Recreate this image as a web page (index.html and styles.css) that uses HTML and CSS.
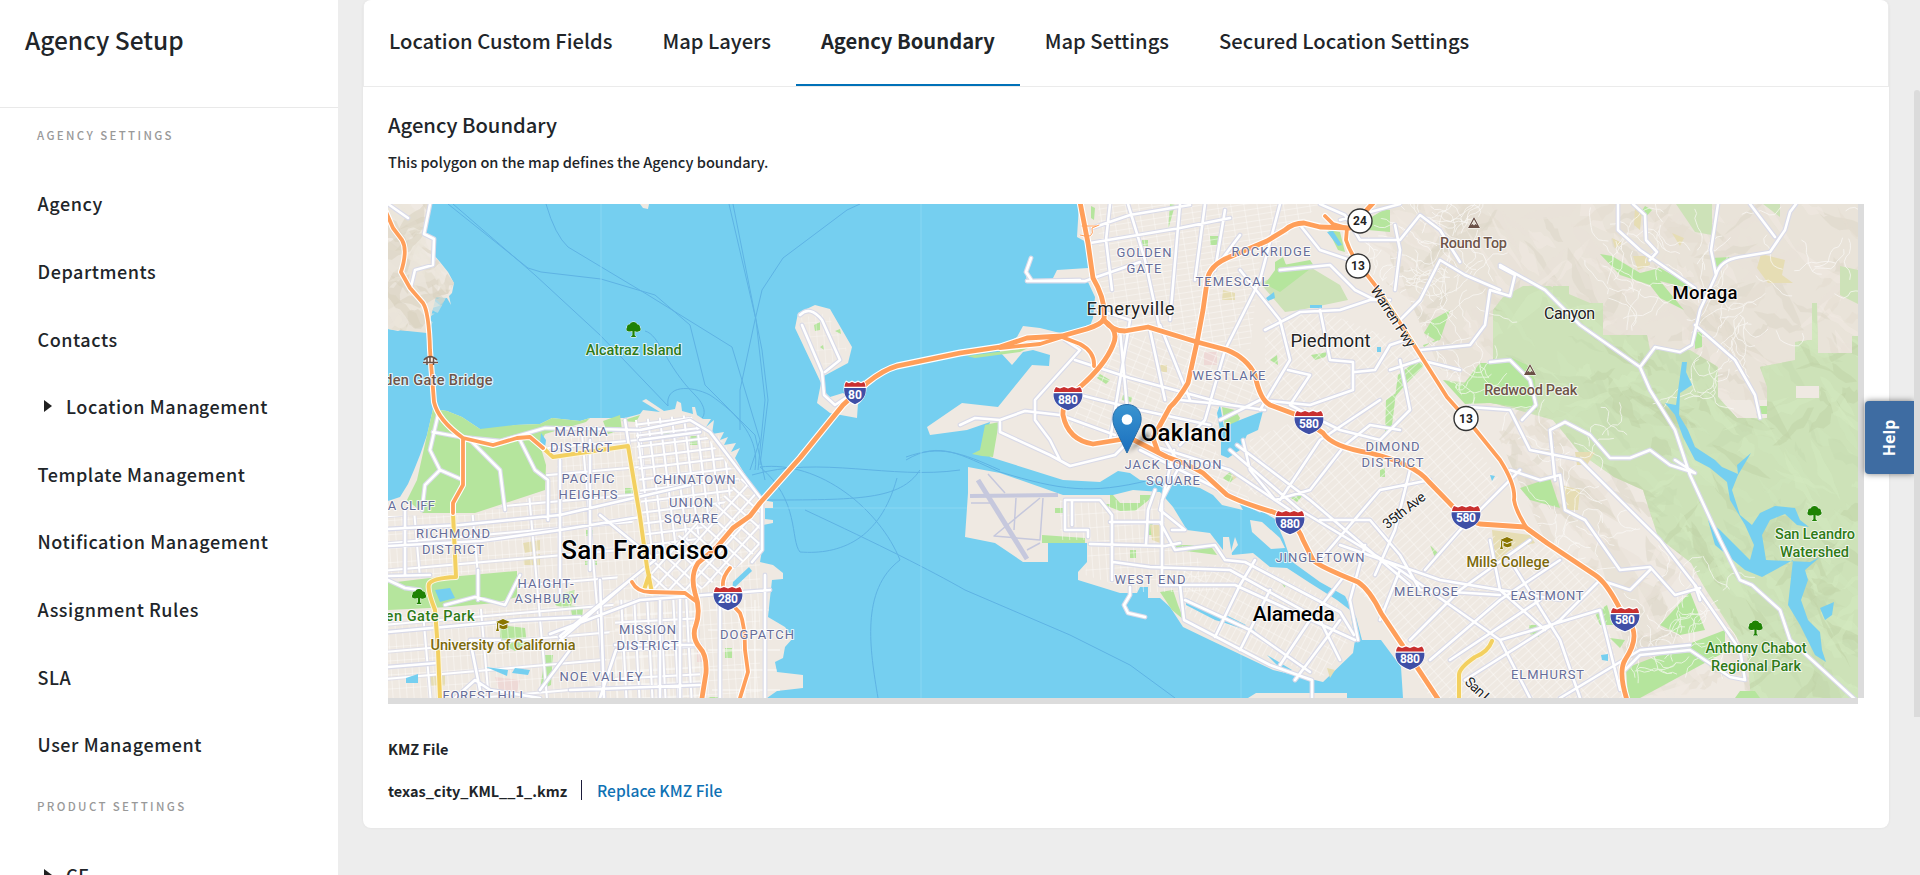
FILE: index.html
```html
<!DOCTYPE html>
<html lang="en">
<head>
<meta charset="utf-8">
<title>Agency Setup</title>
<link rel="stylesheet" href="styles.css">
</head>
<body>
<div class="app">
  <aside class="sidebar">
    <h1 class="sidebar-title"><span class="t-title">Agency Setup</span></h1>
    <h2 class="nav-label">AGENCY SETTINGS</h2>
    <nav class="nav">
      <a class="nav-item">Agency</a>
      <a class="nav-item">Departments</a>
      <a class="nav-item">Contacts</a>
      <a class="nav-item nav-parent"><i class="caret"></i>Location Management</a>
      <a class="nav-item">Template Management</a>
      <a class="nav-item">Notification Management</a>
      <a class="nav-item">Assignment Rules</a>
      <a class="nav-item">SLA</a>
      <a class="nav-item">User Management</a>
    </nav>
    <h2 class="nav-label">PRODUCT SETTINGS</h2>
    <nav class="nav">
      <a class="nav-item nav-parent"><i class="caret"></i>CE</a>
    </nav>
  </aside>
  <main class="main">
    <section class="card">
      <div class="tabs">
        <a class="tab">Location Custom Fields</a>
        <a class="tab">Map Layers</a>
        <a class="tab active">Agency Boundary</a>
        <a class="tab">Map Settings</a>
        <a class="tab">Secured Location Settings</a>
      </div>
      <div class="content">
        <h3 class="heading">Agency Boundary</h3>
        <p class="desc">This polygon on the map defines the Agency boundary.</p>
        <div class="map-frame">
          <svg class="map" viewBox="388 204 1470 494" width="1470" height="494">
            <defs>
              <pattern id="gridWest" width="7" height="14" patternUnits="userSpaceOnUse" patternTransform="rotate(-4)"><path class="lane" d="M0 0H7M0 0V14"/></pattern>
              <pattern id="gridWestMain" width="58" height="27" patternUnits="userSpaceOnUse" patternTransform="rotate(-5)"><path class="mid-case" d="M0 8H58M20 0V27"/><path class="mid" d="M0 8H58M20 0V27"/></pattern>
              <pattern id="gridDown" width="12" height="11" patternUnits="userSpaceOnUse" patternTransform="rotate(-7)"><path class="mid-case" d="M0 4H12M4 0V11"/><path class="mid" d="M0 4H12M4 0V11"/></pattern>
              <pattern id="gridSoma" width="12" height="12" patternUnits="userSpaceOnUse" patternTransform="rotate(42)"><path class="mid-case" d="M0 4H12M4 0V12"/><path class="mid" d="M0 4H12M4 0V12"/></pattern>
              <pattern id="gridMission" width="13" height="28" patternUnits="userSpaceOnUse" patternTransform="rotate(-3)"><path class="lane" d="M0 3H13M0 17H13M8 0V28"/><path class="mid-case" d="M0 10H13M4 0V28"/><path class="mid" d="M0 10H13M4 0V28"/></pattern>
              <pattern id="gridBerk" width="13" height="6" patternUnits="userSpaceOnUse" patternTransform="rotate(-9)"><path class="lane" d="M0 0H13M0 0V6"/></pattern>
              <pattern id="gridOak" width="12" height="7" patternUnits="userSpaceOnUse" patternTransform="rotate(22)"><path class="lane" d="M0 0H12M0 0V7"/></pattern>
              <pattern id="gridEast" width="14" height="6" patternUnits="userSpaceOnUse" patternTransform="rotate(-42)"><path class="lane" d="M0 0H14M0 0V6"/></pattern>
              <pattern id="gridAla" width="6" height="13" patternUnits="userSpaceOnUse" patternTransform="rotate(28)"><path class="lane" d="M0 0H6M0 0V13"/></pattern>
              <clipPath id="sfClip"><path d="M388 501L400 497 408 484 414 470 420 455 427 435 433 409 447 411 462 417 480 429 497 430 515 425 540 424 552 418 580 421 590 418 625 418 640 414 652 410 675 409 695 414 705 419 722 440 733 457 746 476 762 500 763 525 762 550 760 562 772 580 770 598 768 617 785 627 793 638 785 647 783 658 775 662 777 672 803 675 803 688 777 691 767 698 388 698Z"/></clipPath>
              <clipPath id="hillClip"><path d="M1395 204H1858V698H1640L1600 585 1545 540 1500 440 1440 370 1410 300 1345 255Z"/></clipPath>
              <clipPath id="woodClip"><use href="#wood"/></clipPath>
              <clipPath id="marinClip"><path d="M388 204H430L424 235 434 255 454 283 427 333 388 329Z"/></clipPath>
              <symbol id="tree" viewBox="0 0 16 16" overflow="visible"><path class="icon-halo" d="M8 0C5.500 0 4.500 1.200 4.200 2.500 2 2.500 .8 4 1.200 5.500 -.5 7.500 .8 10 3 10 4.500 10.500 6 10 6.800 9.700V14L5 16H11L9.200 14V9.700C10 10.500 12 10.500 13 10 15.500 10 16.500 7.500 14.800 5.500 15.200 4 13.800 2.500 11.800 2.500 11.500 1.200 10.500 0 8 0Z"/></symbol>
              <symbol id="peak" viewBox="0 0 12 11" overflow="visible"><path class="peak" d="M6 0L12 11H0ZM6 2.500L3 8 4.700 7 6 8.500 7.300 7 9 8Z" fill-rule="evenodd"/></symbol>
              <symbol id="cap" viewBox="0 0 14 12" overflow="visible"><path class="cap" d="M7 0L14 3 7 6 0 3ZM3.500 5.500L7 7 11.500 5.300V9C9 10.500 6 10.500 3.500 9ZM1 4H2.200V9L3 12H0L1 9Z"/></symbol>
              <symbol id="shield" viewBox="-16 -13 32 26" overflow="visible">
                <path fill="#fff" d="M-12-12.500L-8-11-4-12.500 0-11 4-12.500 8-11 12-12.500 14.500-9C17 0 13 9 0 13.500-13 9-17 0-14.500-9Z"/>
                <path fill="#c9302f" d="M-12-11L-8-9.500-4-11 0-9.500 4-11 8-9.500 12-11 13.500-8.500 14-6H-14L-13.500-8.500Z"/>
                <path fill="#3f4fa6" d="M-14.400-4.700H14.400C15 3 11 8.500 0 12.200-11 8.500-15 3-14.400-4.700Z"/>
              </symbol>
              <linearGradient id="pin" x2="0" y2="1"><stop offset="0" stop-color="#3a94d0"/><stop offset="1" stop-color="#1a6fbe"/></linearGradient>
              <filter id="soft"><feGaussianBlur stdDeviation="2"/></filter>
            </defs>

            <rect class="water" x="388" y="204" width="1470" height="494"/>
            <g class="ferry">
              <path d="M448 204L528 268 541 272 601 279 655 295 690 325 705 385 755 435 765 480M453 204L535 275 600 335 668 406M546 204Q555 235 568 247L648 295 732 347 760 440 750 470M729 204L756 320 765 400 758 470M733 204L762 350 768 400 760 465M860 204L847 210 783 258 762 290 755 320 740 390 740 430M645 331C660 335 665 365 695 395 705 405 707 415 700 420M668 406C665 385 690 385 710 395 740 415 760 440 755 470"/>
              <path d="M760 467C820 460 880 510 900 560 860 590 870 650 878 698M760 467C800 500 790 540 800 552 840 555 880 540 897 478M752 475C820 455 890 480 960 470M906 460C940 440 960 455 1000 472 1060 490 1090 495 1150 480M906 457C940 445 960 452 1000 470M805 510C880 545 930 570 965 590L1070 635 1130 665 1175 698M760 500C860 500 900 500 920 470"/>
              <path class="tile" d="M601 204V698M921 204V698M1241 204V698M388 508H1240"/>
            </g>

            <!-- shoreline -->
            <g class="land">
              <path d="M388 204H430L428 215 424 223V235L432 240 434 255 440 262 448 272 454 283 452 293 449 296 451 305 447 298 433 297 431 306 429 311 427 333 420 330 413 331 405 328 398 331 388 329Z"/>
              <path d="M388 501L400 497 408 484 414 470 420 455 427 435 433 409 447 411 462 417 480 429 497 430 515 425 540 424 552 418 580 421 590 418 625 418 640 414 643 410 660 412 642 401 646 399 664 411 675 409 677 401 681 403 682 411 693 414 692 407 695 407 697 415 703 419 711 419 706 427 714 420 712 434 724 432 720 440 728 437 724 445 736 443 731 452 740 448 735 458 746 476 762 500 773 502V508H765V519L773 520V523L763 525 762 550 760 562 773 565 783 573V579L772 580 770 598 768 617 785 627 793 638 785 647 783 658 775 662 777 672 803 675V688L777 691 767 698H388Z"/>
              <path d="M798 313L815 305 830 309 852 347 848 363 822 377 823 390 830 397 843 393 858 403 857 418 830 413 817 403 821 383 795 328Z"/>
              <path d="M640 204H649L648 209 643 208Z"/>
              <path d="M1079 204L1077 237 1088 243V268L1057 270 1052 280 1035 279 1027 281 1025 270 1031 258 1027 272 1032 283 1088 282 1095 297 1093 318 1088 331 1060 333 1040 328 1023 326 1017 337 1000 347V352L1012 365 1023 352 1033 350 1050 355 1049 366 1032 365 998 407 962 403 927 427 930 435 967 430 990 422 985 440 990 457 1063 480 1100 482 1118 471 1130 473 1140 480 1177 483 1200 488 1213 495 1222 505 1243 510 1237 500 1222 498 1250 504 1275 519 1284 540 1291 561 1320 582 1345 596 1356 617 1362 640 1381 640 1401 667 1403 698H1858V204Z"/>
              <path d="M968 467L1000 473 1063 495 1113 495 1133 490 1160 492 1173 507 1187 530 1210 533 1223 550 1223 537 1229 537 1232 555 1253 553 1270 567 1287 568 1310 583 1337 600 1350 610 1355 640 1353 653 1323 682 1273 670 1210 640 1183 627 1170 607 1160 598H1148V587H1140L1137 593 1120 593 1078 580V572L1087 562V543H1048V562H1023L995 543 965 537 968 493Z"/>
              <path d="M1250 520L1262 522 1280 538 1285 548 1271 549 1252 532ZM1235 537L1238 545 1230 555ZM1248 698L1256 693H1347V698Z"/>
            </g>

            <!-- relief and woodland -->
            <path class="hill" d="M1375 204H1858V400H1560L1440 370 1410 300ZM1530 475L1590 500 1640 580 1660 590 1700 680 1640 698 1600 560ZM388 240L440 280 427 333 388 329Z"/>
            <g id="reliefHills" clip-path="url(#hillClip)"></g>
            <g id="reliefMarin" clip-path="url(#marinClip)"></g>
            <path class="wood" id="wood" d="M1503 297L1523 286H1550L1590 303H1603V335H1647L1650 350 1690 350 1718 367V397L1737 418H1767V387L1760 367 1795 360V342L1812 340V303H1817L1818 353H1852V336H1858V698H1751L1747 653 1706 590 1691 563 1658 537 1643 490 1614 477 1580 453 1553 420 1500 405 1480 400 1443 380 1470 383 1493 360V310Z"/>
            <g id="reliefWood" clip-path="url(#woodClip)"></g>
            <g class="wood"><path d="M1840 266L1858 270V304L1840 295ZM1676 204H1712V235L1695 232ZM1260 283L1305 264 1340 285 1348 300 1300 310 1285 312ZM1553 286H1569V297H1553ZM1763 204H1780V217Z"/></g>
            <path class="land" d="M1796 386H1819V398H1796Z"/>
            <g class="park">
              <path d="M433 409L447 411 462 417 480 429 515 425 540 424 552 418 580 421 590 418 586 422 545 434 540 445 546 465 545 490 475 513 423 513 407 500 417 480 427 435Z"/>
              <path d="M603 421L620 415 622 430 608 434ZM621 421L640 415 636 422ZM388 583L430 578 460 576 517 571V597L495 603 450 607 388 610ZM500 625L525 628 527 645 515 651 500 643ZM570 605L583 608 582 618 573 620ZM560 594L575 590 570 610 555 605ZM545 655L553 655 551 685 540 690ZM586 530H593V536H586ZM585 561H597V565H585ZM625 488H635V495H625ZM662 432H670V439H662ZM690 436H700V445H690ZM725 648H732V658H725ZM710 697H720V698H708Z"/>
              <path d="M985 425L999 422 993 457 982 456 972 454 980 450ZM967 356L1028 348 1020 352 975 358ZM1100 374L1110 380 1106 384 1097 378ZM1123 395L1132 397 1131 402 1122 400ZM1091 206L1095 208 1094 220 1091 218ZM814 325L820 322 820 330 815 331ZM835 331L840 329 841 334ZM820 347L823 345 824 350Z"/>
              <path d="M1265 284L1278 266 1310 260 1314 266 1280 292ZM1275 262L1283 257 1288 270 1275 273ZM1370 218L1385 209 1390 210V232L1368 230ZM1328 230L1340 232 1345 252 1338 250ZM1222 407L1235 410 1240 418 1235 428 1225 427ZM1210 236H1219V245H1210ZM1311 355L1328 352 1325 357 1315 360ZM1270 360L1277 355 1278 365ZM1102 504H1110V495H1113L1120 503H1140V495H1155L1135 511H1120M1055 508H1067V513H1055ZM1042 535L1085 538V543H1042ZM1173 545L1210 545 1217 555 1178 550ZM1148 523H1153V535H1148ZM1160 592L1173 590 1178 605 1184 620 1172 610ZM1130 550H1136V558H1130ZM1280 581L1287 583 1285 588Z"/>
              <path d="M1600 254L1612 256 1640 273 1660 268 1690 285 1695 290 1660 281 1684 310 1660 298 1650 285 1620 275ZM1712 258L1730 257 1716 272ZM1443 380L1463 385 1480 363 1493 363 1510 357 1527 365 1535 380 1537 410 1490 403 1465 404ZM1423 345L1440 340 1450 310 1432 320 1424 333 1435 340 1424 347ZM1398 375L1420 358 1425 365 1405 385 1395 397ZM1386 400L1396 393 1392 425 1385 437ZM1520 488L1550 478 1560 508 1530 500ZM1595 613L1607 605 1613 625 1600 625ZM1660 625L1690 592 1705 630 1680 635ZM1626 668L1725 630 1725 652 1640 698H1628ZM1529 625L1540 625 1539 637 1530 634ZM1760 698L1755 691H1740L1735 698ZM1610 638L1625 640 1620 648ZM1695 332H1702V347L1695 349ZM1760 406H1767V414H1760Z"/>
              <path d="M1232 470L1236 476 1230 483 1223 478ZM1293 493L1303 495 1297 502 1291 498ZM1170 204L1175 205 1168 230ZM1142 240H1148V246H1142ZM1380 470 1385 468V477H1380ZM1430 545L1440 555 1436 560ZM1640 214 1645 206 1652 210 1645 218Z"/>
            </g>
            <g class="school"><path d="M1761 254L1785 260 1782 275 1793 283H1768L1757 268ZM1635 207L1642 210 1640 230 1634 225ZM1672 233L1684 238 1680 246ZM1633 256H1650V265L1638 270ZM1612 238L1622 243 1615 248ZM1492 530L1530 535 1535 543 1510 550 1495 562ZM1150 525H1163V544L1152 540ZM523 543L540 540V550L525 553ZM523 557L540 554V565H524ZM1230 469L1240 475 1233 480ZM1223 290L1235 293V300H1222ZM1575 452H1595L1587 465H1577ZM1561 485 1580 490 1578 510 1562 510ZM430 675H445V686H430ZM1158 365H1167V372H1158ZM1327 668 1335 670 1330 678Z"/></g>
            <g class="clinic"><path d="M1204 352H1217V365H1204ZM697 645H703V662H697ZM495 677L520 680 517 692 500 693Z"/></g>

            <!-- residential street grids -->
            <g clip-path="url(#sfClip)">
              <path fill="url(#gridWest)" d="M388 516L475 515 545 493 560 460 560 430 740 430 760 560 760 698 388 698V613L500 608 517 600V570L388 580Z"/>
              <path fill="url(#gridWestMain)" d="M388 516L475 515 545 493 548 440 690 420 640 500 620 560 600 698 388 698V613L500 608 517 600V570L388 580Z"/>
              <path fill="url(#gridDown)" d="M635 420L690 415 740 480 700 540 645 560Z"/>
              <path fill="url(#gridSoma)" d="M745 475L763 500V545L740 565 700 590H655L645 560 700 520Z"/>
              <path fill="url(#gridMission)" d="M615 600L700 597V698H615Z"/>
              <path class="lane" fill="none" d="M745 600V698M755 600V698M710 610H770M708 630H780M708 650H780M708 670H780M712 690H780"/>
            </g>
            <path fill="url(#gridBerk)" d="M1098 204H1320L1260 260 1250 350 1200 340 1115 325 1100 280Z"/>
            <path fill="url(#gridOak)" d="M1115 330L1240 355 1265 400 1220 410 1215 450 1250 500 1220 492 1130 440 1070 425Z"/>
            <path fill="url(#gridEast)" d="M1250 440L1310 415 1345 450 1430 485 1500 540 1545 545 1600 590 1625 698H1430L1380 610 1320 560 1290 510 1245 490Z"/>
            <path fill="url(#gridEast)" d="M1265 320L1320 310 1420 350 1440 400 1500 480 1480 520 1440 480 1345 440 1290 405 1265 395Z"/>
            <path fill="url(#gridAla)" d="M1175 570L1253 560 1340 605 1350 640 1323 677 1230 645 1185 610Z"/>
            <path fill="url(#gridWest)" d="M1090 540H1175L1200 560 1220 592H1140L1085 575ZM1060 500H1165V540H1060Z"/>
            <path fill="url(#gridWest)" opacity=".7" d="M800 318L827 313 847 350 825 368Z"/>
            <g id="lanes" class="lane winding" fill="none" clip-path="url(#hillClip)"></g>

            <!-- inland water, above the street texture -->
            <g class="water">
              <path d="M1217 413L1220 405 1224 427 1240 420 1263 411 1258 430 1247 435 1240 450 1228 458 1221 455V436Z"/>
              <path d="M1327 232L1333 231 1342 245 1338 246ZM1266 298L1274 292 1275 298 1268 301ZM1377 347H1381V352H1377ZM1310 305H1322V308H1310ZM733 582L749 567 752 571 732 590ZM435 590L450 588 455 598 440 602ZM406 678L418 674V683H406ZM515 668L530 670 528 675 512 673ZM486 667L508 670 507 676ZM541 433L546 440 545 448 540 444ZM1490 475L1495 476 1492 481ZM1601 655L1608 654 1608 661 1602 660Z"/>
              <path d="M1186 598L1220 615 1228 616 1246 625 1243 629 1225 623 1215 620 1186 605ZM1252 627L1265 642 1258 638ZM1267 655L1292 670 1285 673Z"/>
              <path d="M1682 362L1687 362 1686 372 1692 385 1680 393 1679 415 1688 430 1695 447 1715 460 1722 467 1738 474 1737 465 1751 453 1738 475 1732 490 1740 515 1752 525 1760 513 1775 506 1795 508 1800 520 1809 527 1797 525 1785 514 1770 520 1762 535 1766 560 1810 562 1820 557 1805 570 1808 580 1801 600 1808 620 1820 632 1822 650 1826 662 1815 655 1800 625 1788 605 1793 560 1762 577 1745 570 1715 545 1708 520 1720 530 1750 560 1754 545 1745 525 1730 500 1727 482 1710 468 1695 460 1683 437 1675 415 1665 403 1676 405ZM1820 608L1834 602 1832 615 1825 620Z"/>
            </g>

            <!-- local roads -->
            <g class="road-case"><use href="#roads"/></g>
            <g id="roads" class="road">
              <path d="M388 204L408 218M430 204L424 234 434 239 433 265 415 270 411 287M433 432L460 437 500 441 545 428 640 430 690 420 710 432 762 500 762 550 752 562M388 529L460 525 560 515 690 485M388 546L480 541 560 530 640 517M388 576L430 575M388 632L520 620 580 617M388 667L437 663M405 510V575M478 570V600M560 460V600M590 440V570M625 420L640 520M600 515L655 560 560 636 570 650 540 690M630 580L560 640M500 640L470 640 480 690M550 634L640 600 770 590M765 575V698M720 600V698M455 698L475 680 490 690 540 698M640 440L700 432M388 580L405 588 420 590M445 605L475 597 505 605 520 575M438 415L430 450 440 470 425 485 422 510M440 470L463 480M470 440L500 470 505 510M520 440L535 470 548 480V520M600 580L604 698M660 600V698M680 600V698M615 645H700M570 690L700 685M600 698L616 650"/>
              <path d="M800 315Q810 305 822 320L840 360 825 372M802 325L822 372 824 395 835 405 850 395M1027 281H1085L1140 262M1031 258L1026 272 1032 281 1080 280M1092 228L1130 215 1190 205M1090 243L1180 228 1230 218M1128 204L1145 260 1160 330M1180 204L1170 320M1110 204L1106 240 1112 290M1205 204L1195 280M1225 210L1215 270M1280 204L1260 280 1225 350 1205 420 1180 445M1240 235L1210 275M1098 310L1130 320 1110 440M1075 360L1130 378 1230 405M1080 395L1140 410 1210 425M1120 330L1130 440M1150 330L1165 400M1160 325L1190 400M1065 340L1080 350 1035 400 1035 420 1050 440 1060 460M960 425L975 418 1000 420 1025 411 1060 415 1115 435M1000 422V432L1050 455 1070 466 1115 455 1125 445M1140 450L1260 510M1135 440L1230 470 1290 510"/>
              <path d="M1065 530V500L1100 500 1112 515V580M1065 530H1088V537M1072 500V525M1110 522H1160L1175 550 1215 545 1225 560 1245 562 1340 612 1354 635M1090 544L1165 546 1180 543M1113 562L1150 567 1230 570 1320 620 1340 660M1165 440L1180 465 1162 500V585L1180 585 1184 620 1270 665 1312 680V698M1160 585H1235L1355 640M1174 450L1160 510 1185 530 1172 530M1215 637L1240 585 1255 560M1240 650L1270 590M1280 665L1310 620 1345 575M1295 680L1340 620M1185 600L1250 630 1310 672M1130 587V595L1124 605 1128 613 1145 617M1155 490L1148 510 1146 545"/>
              <path d="M1230 450L1300 510 1400 570 1500 640 1530 698M1237 445L1310 500 1410 585M1243 440L1250 470 1275 500 1310 490 1345 445 1370 425 1400 430M1280 500L1320 440 1380 400M1320 520H1370L1400 555 1420 590 1500 595M1340 545L1440 580 1560 600M1320 560L1380 490 1430 480M1375 575L1395 530 1410 470M1425 570L1460 530 1520 470M1400 570L1380 620M1410 640L1460 590 1530 540M1430 660L1500 600 1560 560M1465 680L1560 620 1600 580M1510 560L1560 640 1580 698M1500 640L1600 610 1620 690M1560 698L1640 650 1690 645M1450 660L1540 600M1490 540L1500 590 1545 630M1365 545L1350 600 1358 640"/>
              <path d="M1240 270L1280 320 1290 360 1260 410M1265 330L1300 312 1340 310 1370 300 1390 300M1280 270L1330 265 1355 290 1375 300M1300 225L1320 250 1350 260M1320 310L1330 360 1353 362V390L1310 405 1260 400 1220 420M1288 370L1310 375 1290 405 1340 430 1380 440 1410 410 1400 360M1180 400L1230 405 1265 410M1320 204L1345 215 1360 240 1400 240 1420 215 1440 230 1460 262M1340 220L1400 204M1395 290L1400 250 1395 225M1400 320L1420 300 1440 260 1465 275 1500 290M1390 370L1420 360 1460 370M1405 340L1390 345 1375 370 1355 372M1420 350L1470 345 1485 325 1490 290 1510 296 1515 275 1500 267M1490 362L1510 360 1530 380 1536 405 1522 420M1470 407L1510 410 1530 450 1580 460 1610 490 1640 520 1660 540 1695 585 1700 600"/>
              <path d="M1500 265L1545 290 1580 325 1640 367 1650 390 1675 430 1690 475 1720 540 1740 580 1752 585 1780 610 1790 640 1858 702M1640 367L1655 347 1680 352 1692 345 1700 310 1716 275 1711 250 1718 204M1618 204V230L1640 250 1695 288M1633 204L1645 215 1646 240 1657 252 1650 260M1716 275Q1720 260 1740 257L1770 252 1785 230 1790 212 1796 204M1750 204L1775 237M1695 325L1735 360 1755 395 1760 418M1555 480L1550 430 1565 422 1590 435 1610 458 1630 458 1650 450 1670 465 1695 473 1675 460M1510 470L1540 480 1560 475 1565 510 1585 520 1620 570 1650 567 1675 595 1700 588M1600 580L1630 590 1650 570M1695 585L1740 650 1745 680 1730 677 1690 650 1640 655 1625 670"/>
            </g>
            <g class="runway"><path stroke-width="4" d="M970 496L1058 495"/><path stroke-width="5" d="M978 480L1027 559"/><path d="M1043 498L1040 540 994 536 1040 498M1016 498L1014 530M988 474L1005 493M971 503H990M1027 550L1040 543"/></g>

            <!-- highways -->
            <g class="yellow-case"><use href="#yellow"/></g>
            <g id="yellow" class="yellow"><path d="M543 448L553 457 628 446 640 517 647 567 652 593M649 575L644 590M453 513L456 577Q432 578 429 584 427 590 435 610L438 650 440 698M1492 641Q1488 652 1475 657 1459 668 1459 675V698"/></g>
            <g class="hwy-case"><use href="#hwy"/></g>
            <g id="hwy" class="hwy">
              <path d="M386 212L393 228 402 240Q408 250 401 272L410 288 423 303Q429 312 430 350L434 402Q438 420 463 438L493 445 517 438 530 437 543 448M463 438V485L453 503V513"/>
              <path class="thick" d="M702 698L706 673Q707 655 700 648 691 637 696 625 701 610 695 593 690 575 698 563L717 547 733 528 750 516 760 503 800 458 843 405 867 383Q883 370 897 366L960 353 1000 347 1027 338 1062 336 1087 329Q1102 324 1104 319 1106 300 1093 278L1088 243 1080 202"/>
              <path d="M632 582Q637 592 650 592L685 593 697 602M730 568Q720 580 724 590L728 600 740 613Q745 625 745 650L748 672 740 698M1000 348L1040 344 1062 337 1080 344Q1095 352 1094 366"/>
              <path class="thick" d="M1103 320Q1120 330 1113 345 1105 365 1080 387 1062 400 1063 415 1068 440 1093 444L1130 438 1167 457Q1190 465 1203 473L1227 495Q1240 502 1273 512 1296 520 1303 540L1313 560Q1318 566 1358 582 1370 590 1381 613L1401 643 1440 702"/>
              <path class="thick" d="M1104 320Q1112 331 1125 331L1148 327 1197 342 1227 350Q1247 358 1255 375 1260 400 1270 405L1297 415 1323 433Q1332 447 1370 453 1415 464 1429 482L1466 520 1480 524 1525 527 1547 543 1595 575Q1606 582 1619 607L1630 623Q1640 638 1625 660 1618 672 1627 700"/>
              <path d="M1325 216L1333 224 1347 228 1346 240Q1350 252 1357 262L1375 285 1400 323 1447 397 1470 423 1500 460Q1516 485 1514 500 1516 512 1528 530L1547 543"/>
              <path class="thick" d="M1374 202Q1365 212 1350 228L1320 227 1304 223Q1293 223 1285 230L1267 241 1232 256Q1208 265 1207 282L1203 310 1197 342 1188 383Q1178 400 1170 407L1153 438 1158 452"/>
              <path class="ramp" d="M1080 235Q1095 240 1092 228L1099 225M1082 226H1096"/>
            </g>

            <g class="area">
              <text x="581" y="436" textLength="53">MARINA</text><text x="581" y="452" textLength="62">DISTRICT</text>
              <text x="588" y="483" textLength="53">PACIFIC</text><text x="588" y="499" textLength="59">HEIGHTS</text>
              <text x="694.500" y="484" textLength="82">CHINATOWN</text><text x="691" y="507" textLength="44">UNION</text><text x="691" y="523" textLength="54">SQUARE</text>
              <text x="403.500" y="510" textLength="63">SEA CLIFF</text>
              <text x="453" y="538" textLength="74">RICHMOND</text><text x="453" y="554" textLength="62">DISTRICT</text>
              <text x="545.500" y="588" textLength="56">HAIGHT-</text><text x="546.500" y="603" textLength="64">ASHBURY</text>
              <text x="647.500" y="634" textLength="57">MISSION</text><text x="647.500" y="650" textLength="62">DISTRICT</text>
              <text x="757" y="638.500" textLength="74">DOGPATCH</text><text x="601" y="680.500" textLength="83">NOE VALLEY</text><text x="484.500" y="700" textLength="84">FOREST HILL</text>
              <text x="1144" y="257" textLength="55">GOLDEN</text><text x="1144" y="273" textLength="35">GATE</text>
              <text x="1271" y="256" textLength="79">ROCKRIDGE</text><text x="1232" y="286" textLength="73">TEMESCAL</text><text x="1229" y="380" textLength="73">WESTLAKE</text>
              <text x="1173" y="469" textLength="97">JACK LONDON</text><text x="1173" y="485" textLength="54">SQUARE</text>
              <text x="1392.500" y="451" textLength="54">DIMOND</text><text x="1392.500" y="467" textLength="62">DISTRICT</text>
              <text x="1150" y="584" textLength="71">WEST END</text><text x="1320" y="562" textLength="89">JINGLETOWN</text>
              <text x="1426" y="596" textLength="64">MELROSE</text><text x="1547" y="600" textLength="73">EASTMONT</text><text x="1547.500" y="679" textLength="73">ELMHURST</text>
            </g>
            <g class="town">
              <text x="1130.500" y="315" textLength="88">Emeryville</text><text x="1330.500" y="347" textLength="80">Piedmont</text>
              <text class="small" x="1569.500" y="319" textLength="51">Canyon</text>
              <text class="street" transform="translate(1389 319) rotate(57)" textLength="70">Warren Fwy</text>
              <text class="street" transform="translate(1407 514) rotate(-38)" textLength="50">35th Ave</text>
              <text class="street" transform="translate(1480 698) rotate(43)" textLength="44">San Lea</text>
            </g>
            <g class="city">
              <text x="644.700" y="558.500" textLength="167" font-size="26">San Francisco</text>
              <text x="1185.700" y="440.500" textLength="90" font-size="24">Oakland</text>
              <text x="1293.800" y="620.500" textLength="82" font-size="21">Alameda</text>
              <text x="1705" y="299" textLength="65" font-size="18.500">Moraga</text>
            </g>
            <g class="poi green">
              <text x="633.700" y="355" textLength="96">Alcatraz Island</text><text x="414" y="621" textLength="121">Golden Gate Park</text>
              <text x="1815" y="538.500" textLength="80">San Leandro</text><text x="1814.500" y="556.500" textLength="69">Watershed</text>
              <text x="1756" y="653" textLength="101">Anthony Chabot</text><text x="1756" y="671" textLength="90">Regional Park</text>
              <use href="#tree" x="626" y="322" width="15" height="15"/><use href="#tree" x="411.500" y="589" width="15" height="15"/>
              <use href="#tree" x="1807" y="506" width="15" height="15"/><use href="#tree" x="1748" y="620.500" width="15" height="15"/>
            </g>
            <g class="poi olive">
              <text x="503" y="650" textLength="145">University of California</text><text x="1508" y="567" textLength="83">Mills College</text>
              <use href="#cap" x="496" y="619" width="14" height="12"/><use href="#cap" x="1500" y="537" width="14" height="12"/>
            </g>
            <g class="poi brown">
              <text x="427" y="385" textLength="131">Golden Gate Bridge</text><text x="1473.500" y="248" textLength="67">Round Top</text><text x="1530.700" y="395" textLength="93">Redwood Peak</text>
              <use href="#peak" x="1468" y="217" width="12" height="11"/><use href="#peak" x="1524" y="364" width="12" height="11"/>
              <path class="bridge-halo" d="M423 362Q430 352 438 362V364H423Z"/>
              <path class="bridge" d="M424 360Q430 353 437 360M423 362.500H438M427 357V365M433.500 357V365M430 356V362"/>
            </g>

            <g class="shields">
              <svg x="843" y="380" width="24" height="25" viewBox="-16 -13 32 26" preserveAspectRatio="none"><use href="#shield" x="-16" y="-13" width="32" height="26"/></svg><text x="855" y="398.500">80</text>
              <use href="#shield" x="1052" y="385" width="32" height="26"/><text x="1068" y="403.500" textLength="20">880</text>
              <use href="#shield" x="1293" y="409" width="32" height="26"/><text x="1309" y="427.500" textLength="20">580</text>
              <use href="#shield" x="1274" y="509" width="32" height="26"/><text x="1290" y="527.500" textLength="20">880</text>
              <use href="#shield" x="1450" y="504" width="32" height="26"/><text x="1466" y="522" textLength="20">580</text>
              <use href="#shield" x="1609" y="606" width="32" height="26"/><text x="1625" y="624" textLength="20">580</text>
              <use href="#shield" x="1394" y="644.500" width="32" height="26"/><text x="1410" y="663" textLength="20">880</text>
              <use href="#shield" x="712" y="585" width="32" height="26"/><text x="728" y="603" textLength="20">280</text>
            </g>
            <g class="badges">
              <circle cx="1360" cy="221" r="12"/><text x="1360" y="225">24</text>
              <circle cx="1358" cy="266" r="12"/><text x="1358" y="270">13</text>
              <circle cx="1466" cy="418.500" r="12"/><text x="1466" y="422.500">13</text>
            </g>
            <path filter="url(#soft)" opacity=".4" d="M1127 453L1145 432 1152 436Z"/>
            <path fill="url(#pin)" stroke="#2a6ea8" d="M1127 453L1114.500 427C1110 416 1115 404.500 1127 404.500S1144 416 1139.500 427Z"/>
            <circle cx="1127" cy="419.500" r="5.300" fill="#fff"/>
          </svg>
        </div>
        <h4 class="file-title">KMZ File</h4>
        <div class="file-row"><b class="file-name">texas_city_KML__1_.kmz</b><i class="bar"></i><a class="replace">Replace KMZ File</a></div>
      </div>
    </section>
  </main>
  <button class="help"><span>Help</span></button>
  <div class="scroll-thumb"></div>
</div>
<script src="terrain.js"></script>
</body>
</html>
```
FILE: styles.css
```css
* { box-sizing: border-box; }
body { margin: 0; background: #ededed; color: #212529; font-family: "Noto Sans CJK SC", "Noto Sans", sans-serif; font-weight: 500; }
h1, h2, h3, h4, p { margin: 0; font-weight: 500; }
.app { display: flex; height: 875px; overflow: hidden; position: relative; }
.sidebar { width: 338px; flex: none; background: #fff; overflow: hidden; }
.sidebar-title { height: 108px; padding: 22px 0 0 25px; border-bottom: 1px solid #e9e9e9; font-size: 24.500px; line-height: 36px; }
.nav-label { height: 62.700px; padding: 17px 0 0 37px; font-size: 11.500px; line-height: 20px; letter-spacing: 2.350px; color: #999; }
.nav { position: relative; top: -1px; }
.nav-item { display: flex; align-items: center; height: 67.600px; padding-left: 37.500px; font-size: 18px; letter-spacing: .56px; white-space: nowrap; }
.nav-parent { padding-left: 44px; }
.caret { border: 6px solid transparent; border-left: 8px solid #212121; border-right: 0; margin-right: 14px; }
.main { flex: 1; padding: 0 31px 0 25px; }
.card { height: 828px; background: #fff; border-radius: 8px; box-shadow: 0 0 3px rgba(0,0,0,.06); }
.tabs { display: flex; height: 87px; border: 1px solid #ebebeb; border-top: 0; border-radius: 6px 6px 0 0; }
.tab { height: 86px; padding: 0 25px; font-size: 20.180px; line-height: 81px; white-space: nowrap; }
.tab.active { font-weight: 700; border-bottom: 2px solid #0071b8; }
.content { padding: 23px 25px 0; }
.heading { font-size: 20.200px; line-height: 30px; }
.desc { font-size: 14.580px; line-height: 22px; margin-top: 11px; }
.map-frame { width: 1476px; height: 500px; margin-top: 31px; background: linear-gradient(#dcdcdc, #dcdcdc) 1470px 0 / 6px 494px no-repeat, linear-gradient(#dcdcdc, #dcdcdc) 0 494px / 1470px 6px no-repeat; }
.map { display: block; }
.file-title { margin-top: 34px; font-size: 14.500px; line-height: 22px; font-weight: 700; }
.file-row { display: flex; align-items: center; height: 22px; margin-top: 19px; font-size: 14.470px; }
.file-name { font-weight: 700; }
.bar { width: 1px; height: 20px; background: #1b1b3a; margin: 0 15px 0 14px; }
.replace { color: #0e71b4; font-size: 15.600px; }
.help { position: absolute; left: 1865px; top: 401px; width: 49px; height: 73px; padding: 0; border: 0; border-radius: 4px 0 0 4px; background: #3e6ca2; color: #fff; box-shadow: 0 0 6px rgba(0,0,0,.5); display: flex; align-items: center; justify-content: center; }
.help span { font: 700 16px "Noto Sans", sans-serif; transform: rotate(-90deg); }
.scroll-thumb { position: absolute; left: 1914px; top: 90px; width: 6px; height: 627px; background: #dbdbdb; border-radius: 3px 3px 0 0; }

.water { fill: #75cff0; }
.land { fill: #efe9e2; }
.hill { fill: #e9e3d9; }
.wood { fill: #cde2b8; }
.park { fill: #b5e59d; }
.school { fill: #e6ddb4; }
.clinic { fill: #eed9d6; }
.ferry { fill: none; stroke: #5eb3e4; stroke-width: 1; }
.tile { stroke: #8ad7f3; }
.lane { stroke: #fbfaf8; stroke-width: 1; }
.winding { opacity: .7; }
.mid { stroke: #fff; stroke-width: 2; fill: none; }
.mid-case { stroke: #dcdce8; stroke-width: 3.600; fill: none; }
.road, .road-case, .yellow, .yellow-case, .hwy, .hwy-case, .runway { fill: none; stroke-linejoin: round; stroke-linecap: round; }
#roads { stroke: var(--road, #fff); stroke-width: var(--road-w, 2.600); }
.road-case { --road: #d9dae8; --road-w: 4.800; }
#yellow { stroke: var(--yel, #f3d060); stroke-width: var(--yel-w, 4); }
.yellow-case { --yel: #fbf6e4; --yel-w: 6; }
#hwy { stroke: var(--hw, #ff9f5a); stroke-width: var(--hw-w, 3.800); }
.hwy-case { --hw: #fff; --hw-w: 6; --hw-t: 7; --hw-r: 2; }
.thick { stroke-width: var(--hw-t, 4.800); }
.ramp { stroke-width: var(--hw-r, 1); }
.runway { stroke: #c6c8dd; stroke-width: 1.500; stroke-linecap: butt; }
.map text { font-family: Roboto, sans-serif; font-weight: 400; text-anchor: middle; paint-order: stroke; stroke: rgba(255,255,255,.8); stroke-width: 2px; stroke-linejoin: round; }
.area text { font-size: 13px; fill: #666d99; }
.town text { font-size: 18.500px; fill: #222; }
.map .town .small { font-size: 16px; }
.map .town .street { font-size: 14px; }
.map .city text { font-weight: 500; fill: #000; }
.map .poi text { font-size: 14.500px; font-weight: 500; }
.green { fill: #2f7a17; }
.olive { fill: #7c6a0c; }
.brown { fill: #6f554a; }
.bridge { fill: none; stroke: #6b5147; stroke-width: 1.500; }
.bridge-halo { fill: #fff; opacity: .8; }
.icon-halo { fill: #1f8204; stroke: #fff; stroke-width: 1; paint-order: stroke; }
.cap { fill: #8a7600; stroke: #fff; stroke-width: 1; paint-order: stroke; }
.peak { fill: #6b5147; stroke: #fff; stroke-width: 1; paint-order: stroke; }
.map .shields text { font-size: 12px; font-weight: 700; fill: #fff; stroke: none; }
.badges circle { fill: #fff; stroke: #333; stroke-width: 1.400; }
.map .badges text { font-size: 12px; font-weight: 700; fill: #222; stroke: none; }
```
FILE: terrain.js
```js
// Deterministic relief shading and winding hill lanes.
let seed = 41;
const rnd = () => (seed = (seed * 16807) % 2147483647) / 2147483647;
const NS = 'http://www.w3.org/2000/svg';

function add(id, d, attrs) {
  const p = document.createElementNS(NS, 'path');
  p.setAttribute('d', d);
  for (const k in attrs) p.setAttribute(k, attrs[k]);
  document.getElementById(id).appendChild(p);
}

// Elongated ridges that run from north-west to south-east.
function ridges(id, box, count, colors) {
  for (let i = 0; i < count; i++) {
    const x = box[0] + rnd() * box[2], y = box[1] + rnd() * box[3];
    const a = (rnd() < .7 ? .75 : -.6) + (rnd() - .5) * .8;
    const len = 10 + rnd() * 30, w = 3 + rnd() * 9;
    let top = [], bottom = [];
    for (let t = -1; t <= 1.01; t += .25) {
      const half = w * (1 - t * t) * (.5 + rnd() * .8);
      const wob = (rnd() - .5) * 5;
      const px = x + Math.cos(a) * len * t, py = y + Math.sin(a) * len * t + wob;
      top.push(`${(px - Math.sin(a) * half).toFixed(1)} ${(py + Math.cos(a) * half).toFixed(1)}`);
      bottom.unshift(`${(px + Math.sin(a) * half * .4).toFixed(1)} ${(py - Math.cos(a) * half * .4).toFixed(1)}`);
    }
    add(id, 'M' + top.concat(bottom).join('L') + 'Z', { fill: colors[i % colors.length], opacity: .55 });
  }
}
ridges('reliefHills', [1380, 204, 480, 494], 560, ['#ddd7c8', '#f0eae2', '#e3ddd0', '#e9e2d8']);
ridges('reliefMarin', [388, 204, 70, 130], 50, ['#d8d1c0', '#ebe5da']);
ridges('reliefWood', [1440, 286, 420, 412], 420, ['#c1d4a8', '#d4e9c0', '#c6dab0', '#d0e6bc']);

function lanes(box, count) {
  let d = '';
  for (let i = 0; i < count; i++) {
    let x = box[0] + rnd() * box[2], y = box[1] + rnd() * box[3], a = rnd() * 6.3;
    d += `M${x.toFixed(1)} ${y.toFixed(1)}`;
    for (let s = 0; s < 9; s++) {
      a += (rnd() - .5) * 1.7;
      x += Math.cos(a) * 5; y += Math.sin(a) * 5;
      d += `L${x.toFixed(1)} ${y.toFixed(1)}`;
    }
  }
  add('lanes', d, {});
}
lanes([1350, 204, 130, 200], 120);
lanes([1600, 220, 130, 100], 34);
lanes([1690, 310, 60, 90], 20);
lanes([1730, 204, 120, 130], 12);
lanes([1500, 430, 130, 150], 40);
lanes([1620, 570, 110, 110], 34);
```
